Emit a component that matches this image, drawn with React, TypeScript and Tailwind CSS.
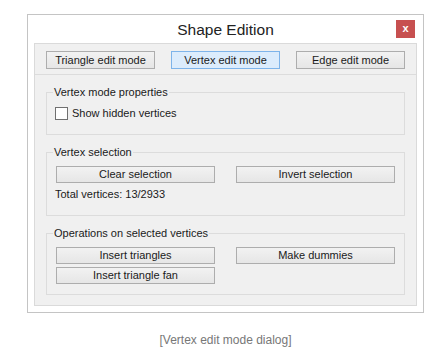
export default function App() {
  const btn =
    "h-[17px] border border-[#adadad] bg-gradient-to-b from-[#f2f2f2] to-[#e6e6e6] text-[11px] leading-[15px] text-[#1a1a1a]";

  return (
    <div className="w-[442px] h-[356px] bg-white font-['Liberation_Sans',Arial,sans-serif] text-[#1a1a1a]">
      <div className="pl-[27px] pt-[14px]">
        {/* dialog */}
        <div className="w-[397px] h-[299px] border border-[#c4c4c4] bg-white flex flex-col">
          <div className="h-[28px] flex items-center relative">
            <div className="flex-1 text-center text-[15.5px] leading-[20px] text-[#222] pt-[2px]">
              Shape Edition
            </div>
            <div className="absolute right-[8px] top-[5px] w-[19px] h-[18px] bg-[#c75050] flex items-center justify-center text-white text-[11px] font-bold leading-none pb-[2px]">
              x
            </div>
          </div>

          <div className="mx-[6px] mb-[6px] flex-1 border border-[#dadada] bg-[#f0f0f0] flex flex-col">
            {/* mode buttons */}
            <div className="flex justify-between px-[11px] pt-[7px] pb-[5px]">
              <button className={`${btn} w-[109px] h-[18px]`}>Triangle edit mode</button>
              <button className="w-[109px] h-[18px] border border-[#7eb4ea] bg-[#dcecfc] text-[11px] leading-[15px] text-[#1a1a1a]">
                Vertex edit mode
              </button>
              <button className={`${btn} w-[109px] h-[18px]`}>Edge edit mode</button>
            </div>
            <div className="border-t border-[#dcdcdc]" />

            <div className="px-[11px] pt-[9px] flex flex-col gap-[9px]">
              <fieldset className="border border-[#dcdcdc] px-[8px] pb-[14px]">
                <legend className="-ml-[2px] px-[1px] text-[11px] leading-[16px]">
                  Vertex mode properties
                </legend>
                <label className="flex items-center gap-[4px] mt-[7px] text-[11px] leading-[13px]">
                  <span className="w-[13px] h-[13px] border border-[#707070] bg-white" />
                  Show hidden vertices
                </label>
              </fieldset>

              <fieldset className="border border-[#dcdcdc] px-[9px] pb-[14px]">
                <legend className="-ml-[3px] px-[1px] text-[11px] leading-[16px]">
                  Vertex selection
                </legend>
                <div className="grid grid-cols-2 gap-x-[21px] mt-[6px]">
                  <button className={btn}>Clear selection</button>
                  <button className={btn}>Invert selection</button>
                </div>
                <div className="mt-[4px] text-[11px] leading-[14px] -ml-[1px]">
                  Total vertices: 13/2933
                </div>
              </fieldset>

              <fieldset className="border border-[#dcdcdc] px-[9px] pb-[10px]">
                <legend className="-ml-[3px] px-[1px] text-[11px] leading-[16px]">
                  Operations on selected vertices
                </legend>
                <div className="grid grid-cols-2 gap-x-[21px] gap-y-[3px] mt-[6px]">
                  <button className={btn}>Insert triangles</button>
                  <button className={btn}>Make dummies</button>
                  <button className={btn}>Insert triangle fan</button>
                </div>
              </fieldset>
            </div>
          </div>
        </div>
      </div>

      <div className="ml-[27px] w-[397px] mt-[20px] text-center text-[12px] leading-[14px] text-[#777]">
        [Vertex edit mode dialog]
      </div>
    </div>
  );
}
